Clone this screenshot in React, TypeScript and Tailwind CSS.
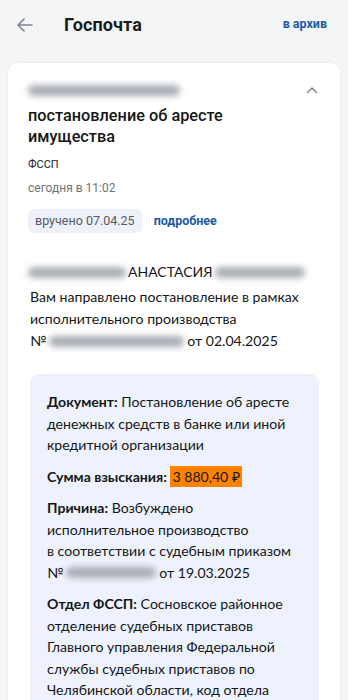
import React from "react";

const Blur = ({ w, h = 9, className = "" }: { w: number; h?: number; className?: string }) => (
  <span
    className={"inline-block rounded-full bg-[#a9adb4] blur-[3px] align-middle " + className}
    style={{ width: w, height: h }}
  />
);

export default function App() {
  return (
    <div className="w-[348px] h-[700px] overflow-hidden bg-[#f4f5f7] font-['Roboto',sans-serif]">
      {/* header */}
      <div className="flex items-center h-[48px] pl-[17px] pr-[21px]">
        <svg width="16" height="14" viewBox="0 0 16 14" fill="none" className="mt-[1px]">
          <path d="M15 7H1.5M7 1L1 7l6 6" stroke="#7b8594" strokeWidth="1.6" strokeLinecap="round" strokeLinejoin="round" />
        </svg>
        <div className="ml-[31px] text-[18px] font-bold text-[#1b1b1b] tracking-[0.1px]">Госпочта</div>
        <div className="ml-auto text-[12.5px] font-bold text-[#1d5aa5]">в архив</div>
      </div>

      {/* card */}
      <div className="mt-[14px] mx-[7px] bg-white rounded-[11px] border border-[#eef0f2] shadow-[0_0_3px_rgba(0,0,0,0.04)] pl-[20px] pr-[20px] pt-[21px] h-[700px]">
        <div className="flex items-start justify-between">
          <Blur w={152} h={11} className="mt-[1px]" />
          <svg width="12" height="8" viewBox="0 0 12 8" className="mt-[2px] mr-[2px]">
            <path d="M1.5 6.5L6 2l4.5 4.5" stroke="#8a8f97" strokeWidth="1.5" fill="none" strokeLinecap="round" strokeLinejoin="round" />
          </svg>
        </div>
        <div className="mt-[9px] text-[16.3px] leading-[21px] font-medium text-[#161616]">
          постановление об аресте
          <br />
          имущества
        </div>
        <div className="mt-[11px] text-[11px] leading-[14px] text-[#222]">ФССП</div>
        <div className="mt-[8px] text-[12px] leading-[16px] text-[#6f7378]">сегодня в 11:02</div>
        <div className="mt-[13px] flex items-center">
          <div className="h-[24px] px-[7px] rounded-[6px] bg-[#eef2f8] flex items-center text-[12.5px] text-[#555a61]">
            вручено 07.04.25
          </div>
          <div className="ml-[12px] text-[12.5px] font-bold text-[#1d5aa5]">подробнее</div>
        </div>

        <div className="font-['Lato','Noto_Sans',sans-serif] text-[#161616]">
          <div className="mt-[28px] flex items-center text-[14px] leading-[22px]">
            <Blur w={98} h={11} />
            <span className="mx-[2px]">АНАСТАСИЯ</span>
            <Blur w={90} h={11} />
          </div>
          <div className="mt-[3px] text-[14.1px] leading-[22px] pl-[2px]">
            Вам направлено постановление в рамках
            <br />
            исполнительного производства
            <br />
            <span className="inline-flex items-center">
              №<Blur w={135} h={11} className="mx-[3px]" />
              от 02.04.2025
            </span>
          </div>

          <div className="mt-[22px] ml-[2px] mr-[1px] bg-[#edf2fc] rounded-[9px] pl-[17px] pr-[10px] pt-[17px] h-[400px] text-[14.1px] leading-[21.5px]">
            <p>
              <b className="font-bold">Документ:</b> Постановление об аресте денежных средств в банке или иной кредитной организации
            </p>
            <p className="mt-[10px]">
              <b className="font-bold">Сумма взыскания:</b>{" "}
              <span className="bg-[#ff8200] px-[2px] py-[2px]">3 880,40 ₽</span>
            </p>
            <p className="mt-[10px]">
              <b className="font-bold">Причина:</b> Возбуждено
              <br />
              исполнительное производство
              <br />в соответствии с судебным приказом
              <br />
              <span className="inline-flex items-center">
                №<Blur w={90} h={11} className="mx-[3px]" />
                от 19.03.2025
              </span>
            </p>
            <p className="mt-[10px]">
              <b className="font-bold">Отдел ФССП:</b> Сосновское районное отделение судебных приставов Главного управления Федеральной службы судебных приставов по Челябинской области, код отдела
            </p>
          </div>
        </div>
      </div>
    </div>
  );
}
